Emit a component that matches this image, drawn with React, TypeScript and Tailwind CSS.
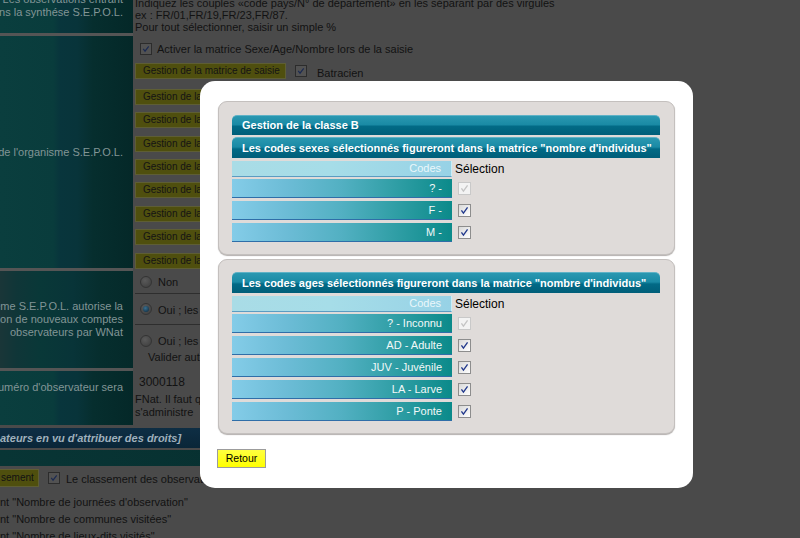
import React from "react";

const FONT = "font-['Liberation_Sans',Arial,sans-serif]";

// --- page behind the modal (already dimmed colours) ---

function DimCheck({ className = "" }: { className?: string }) {
  return (
    <span className={`flex h-[12px] w-[12px] shrink-0 items-center justify-center border border-[#2c2c2c] bg-[#525252] ${className}`}>
      <svg viewBox="0 0 10 10" className="h-[8px] w-[8px]">
        <path d="M1.6 4.8 L3.8 7.8 L8.4 1.8" fill="none" stroke="#1b2a52" strokeWidth="1.5" />
      </svg>
    </span>
  );
}

function DimRadio({ checked }: { checked?: boolean }) {
  return (
    <span className="flex h-[12px] w-[12px] shrink-0 items-center justify-center rounded-full border border-[#343434] bg-[radial-gradient(circle_at_40%_35%,#5a5a5a,#3c3c3c)]">
      {checked && <span className="h-[6px] w-[6px] rounded-full bg-[radial-gradient(circle_at_40%_35%,#3a6f8f,#0a2538)]" />}
    </span>
  );
}

function DimButton({ children, className = "" }: { children: React.ReactNode; className?: string }) {
  return (
    <div className={`flex h-[16px] items-center overflow-hidden whitespace-nowrap border border-[#5e5e34] bg-[#4f4f0e] px-[7px] text-[10px] leading-none text-[#141414] ${className}`}>
      {children}
    </div>
  );
}

function TealCell({ children, className = "" }: { children?: React.ReactNode; className?: string }) {
  return (
    <div className={`flex w-[133px] shrink-0 flex-col items-end justify-center overflow-hidden pr-[10px] text-[11px] leading-[13px] text-[#829596] ${className}`}>
      {children}
    </div>
  );
}

function Line({ children }: { children: React.ReactNode }) {
  return <div className="flex w-full justify-end whitespace-nowrap">{children}</div>;
}

function Page() {
  return (
    <div className={`${FONT} -mt-[9px] w-[640px]`}>
      {/* row 1 */}
      <div className="flex h-[42px]">
        <TealCell className="justify-start pt-[2px] bg-[linear-gradient(to_right,#0a3e3e_0%,#093c3c_40%,#08353c_45%,#08343a_58%,#062e2e_70%,#042828_100%)]">
          <Line>Les observations entrant</Line>
          <Line>dans la synthése S.E.P.O.L.</Line>
        </TealCell>
        <div className="ml-[2px] flex-1 whitespace-nowrap pt-[6px] text-[11px] leading-[12px] text-[#121212]">
          <div>Indiquez les couples «code pays/N° de département» en les séparant par des virgules</div>
          <div>ex : FR/01,FR/19,FR/23,FR/87.</div>
          <div>Pour tout sélectionner, saisir un simple %</div>
        </div>
      </div>

      {/* row 2 */}
      <div className="flex h-[235px]">
        <TealCell className="border-t-[3px] border-[#555555] bg-[linear-gradient(to_right,#0a3e3e_0%,#093c3c_40%,#08353c_45%,#08343a_58%,#062e2e_70%,#042828_100%)]">
          <Line>Nom court de l'organisme S.E.P.O.L.</Line>
        </TealCell>
        <div className="ml-[2px] flex-1 pt-[9px] text-[11px] text-[#121212]">
          <div className="flex h-[14px] items-center gap-[5px] pl-[5px]">
            <DimCheck />
            <span>Activer la matrice Sexe/Age/Nombre lors de la saisie</span>
          </div>
          <div className="mt-[5px] flex flex-col gap-[7.4px]">
            <div className="flex items-center">
              <DimButton className="w-[151px]">Gestion de la matrice de saisie</DimButton>
              <DimCheck className="ml-[9px]" />
              <span className="ml-[10px] mt-[4px]">Batracien</span>
            </div>
            <DimButton className="w-[150px]">Gestion de la classe A</DimButton>
            <DimButton className="w-[150px]">Gestion de la classe B</DimButton>
            <DimButton className="w-[150px]">Gestion de la classe C</DimButton>
            <DimButton className="w-[150px]">Gestion de la classe D</DimButton>
            <DimButton className="w-[150px]">Gestion de la classe E</DimButton>
            <DimButton className="w-[150px]">Gestion de la classe F</DimButton>
            <DimButton className="w-[150px]">Gestion de la classe G</DimButton>
            <DimButton className="w-[150px]">Gestion de la classe H</DimButton>
          </div>
        </div>
      </div>

      {/* row 3 */}
      <div className="flex h-[100px]">
        <TealCell className="border-t-[3px] border-[#555555] bg-[linear-gradient(to_right,#1a3638_0%,#103638_12%,#093838_30%,#083438_55%,#062e2e_75%,#052a2a_100%)]">
          <Line>Le système S.E.P.O.L. autorise la</Line>
          <Line>création de nouveaux comptes</Line>
          <Line>observateurs par WNat</Line>
        </TealCell>
        <div className="ml-[2px] flex-1 pt-[3px] text-[11px] text-[#121212]">
          <div className="flex h-[23px] items-center gap-[6px] border-b border-[#2e2e2e] pl-[5px]">
            <DimRadio />
            <span>Non</span>
          </div>
          <div className="flex h-[31px] items-center gap-[6px] border-b border-[#2e2e2e] pl-[5px]">
            <DimRadio checked />
            <span className="mt-[3px]">Oui ; les comptes sont créés automatiquement</span>
          </div>
          <div className="flex items-center gap-[6px] pl-[5px] pt-[8px]">
            <DimRadio />
            <span>Oui ; les comptes sont à valider</span>
          </div>
          <div className="pl-[13px] leading-[14px]">Valider automatiquement</div>
        </div>
      </div>

      {/* row 4 */}
      <div className="flex h-[57px]">
        <TealCell className="justify-start pt-[10px] border-t-[3px] border-[#555555] bg-[linear-gradient(to_right,#0a3e3e_0%,#093c3c_40%,#08353c_45%,#08343a_58%,#062e2e_70%,#042828_100%)]">
          <Line>Le numéro d'observateur sera</Line>
        </TealCell>
        <div className="ml-[2px] flex-1 pt-[6px] text-[11px] leading-[12.5px] text-[#121212]">
          <div className="pl-[4px] text-[12px] leading-[16px]">3000118</div>
          <div className="mt-[3px] whitespace-nowrap">FNat. Il faut que l'organisme</div>
          <div className="whitespace-nowrap">s'administre</div>
        </div>
      </div>

      {/* bands */}
      <div className="mt-[3px] flex h-[20px] items-center whitespace-nowrap bg-[linear-gradient(to_bottom,#0e2e44,#0a2638)] text-[11px] font-bold italic text-[#9fb0bc]">
        ateurs en vu d'attribuer des droits]
      </div>
      <div className="mt-[2px] h-[16px] bg-[linear-gradient(to_right,#083535,#072f2f_50%,#052828)]" />

      {/* bottom */}
      <div className="mt-[2px] flex items-center whitespace-nowrap text-[11px] text-[#121212]">
        <div className="flex h-[18px] w-[39px] items-center border border-l-0 border-[#5e5e34] bg-[#4f4f0e] pl-[1px] text-[10px] leading-none">sement</div>
        <DimCheck className="ml-[9px]" />
        <span className="ml-[6px] mt-[3px]">Le classement des observateurs se fait selon</span>
      </div>
      <div className="mt-[6px] whitespace-nowrap text-[11px] leading-[17px] text-[#121212]">
        <div>nt "Nombre de journées d'observation"</div>
        <div>nt "Nombre de communes visitées"</div>
        <div>nt "Nombre de lieux-dits visités"</div>
      </div>
    </div>
  );
}

// --- modal ---

function Check({ disabled }: { disabled?: boolean }) {
  return (
    <span
      className={`flex h-[13px] w-[13px] items-center justify-center border ${
        disabled ? "border-[#c9c9c9] bg-[#f3f3f3]" : "border-[#8d8d8d] bg-[linear-gradient(135deg,#d8d8d8,#ffffff)]"
      }`}
    >
      <svg viewBox="0 0 10 10" className="h-[9px] w-[9px]">
        <path d="M1.6 4.9 L3.8 7.9 L8.4 1.6" fill="none" stroke={disabled ? "#c4c4c4" : "#22398c"} strokeWidth="1.5" />
      </svg>
    </span>
  );
}

function HeaderBar({ children, className = "" }: { children: React.ReactNode; className?: string }) {
  return (
    <div
      className={`flex items-center whitespace-nowrap rounded-t-[5px] border-t border-[#5fb2c6] bg-[linear-gradient(to_bottom,#2a98b1_0%,#1a8aa5_45%,#026a86_55%,#005e79_100%)] pl-[10px] text-[11px] font-bold text-white ${className}`}
    >
      {children}
    </div>
  );
}

function CodesHead() {
  return (
    <div className="flex h-[16px]">
      <div className="flex w-[220px] items-center justify-end border-b border-r border-b-[#5b9cc2] border-r-[#c7eef8] bg-[linear-gradient(to_right,#a9dce6,#a6dde8_45%,#97d2e6)] pr-[10px] text-[11px] text-[#eaf7fb]">
        Codes
      </div>
      <div className="flex items-center pl-[3px] text-[12px] text-black">Sélection</div>
    </div>
  );
}

function CodeRow({ label, disabled, className = "" }: { label: string; disabled?: boolean; className?: string }) {
  return (
    <div className={`flex h-[19px] ${className}`}>
      <div className="flex w-[220px] items-center justify-end border-b border-[#2f6ea8] bg-[linear-gradient(to_right,#84cce8_0%,#6cbcd6_25%,#52b0c2_50%,#33a0a8_72%,#0b8a8a_100%)] pr-[10px] text-[11px] text-[#f2f8f8]">
        {label}
      </div>
      <div className="flex items-center pl-[6px]">
        <Check disabled={disabled} />
      </div>
    </div>
  );
}

function Panel({ children, className = "" }: { children: React.ReactNode; className?: string }) {
  return (
    <div className={`w-[457px] rounded-[9px] border border-[#c4c0be] bg-[#dfdbd9] pl-[13px] pr-[14px] pb-[12px] shadow-[0_1px_1px_#b4b0ae] ${className}`}>
      {children}
    </div>
  );
}

export default function App() {
  return (
    <div className={`${FONT} relative h-[538px] w-[800px] overflow-hidden bg-[#4a4a4a]`}>
      <Page />

      <div className="absolute left-[200px] top-[81px] h-[407px] w-[493px] rounded-[15px] bg-white pl-[18px] pt-[20px]">
        <Panel className="pt-[13px]">
          <HeaderBar className="h-[20px]">Gestion de la classe B</HeaderBar>
          <HeaderBar className="mt-[2px] h-[21px]">
            Les codes sexes sélectionnés figureront dans la matrice "nombre d'individus"
          </HeaderBar>
          <div className="mt-[3px]">
            <CodesHead />
          </div>
          <CodeRow className="mt-[2px]" label="? -" disabled />
          <CodeRow className="mt-[3px]" label="F -" />
          <CodeRow className="mt-[3px]" label="M -" />
        </Panel>

        <Panel className="mt-[4px] pt-[12px]">
          <HeaderBar className="h-[21px]">
            Les codes ages sélectionnés figureront dans la matrice "nombre d'individus"
          </HeaderBar>
          <div className="mt-[3px]">
            <CodesHead />
          </div>
          <CodeRow className="mt-[2px]" label="? - Inconnu" disabled />
          <CodeRow className="mt-[3px]" label="AD - Adulte" />
          <CodeRow className="mt-[3px]" label="JUV - Juvénile" />
          <CodeRow className="mt-[3px]" label="LA - Larve" />
          <CodeRow className="mt-[3px]" label="P - Ponte" />
        </Panel>

        <button className="-ml-[1px] mt-[15px] flex h-[19px] w-[49px] items-center justify-center border border-[#9c9c9c] bg-[linear-gradient(to_bottom,#ffff40,#ffff00)] text-[10.5px] text-black">
          Retour
        </button>
      </div>
    </div>
  );
}
